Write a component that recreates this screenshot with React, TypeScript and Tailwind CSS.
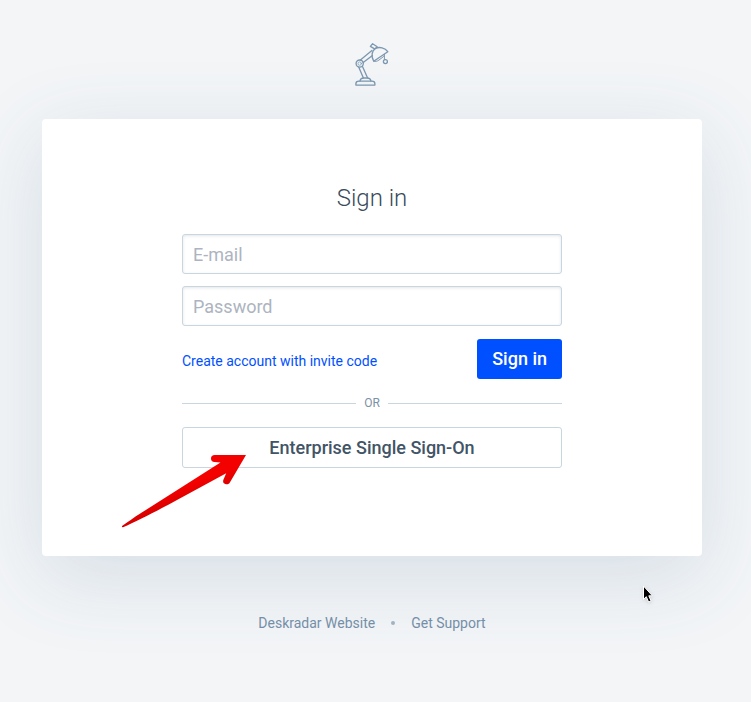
import React from "react";

function LampLogo() {
  return (
    <svg
      className="h-11 w-9"
      viewBox="0 0 36 44"
      fill="none"
      stroke="#7c97b0"
      strokeWidth="1.3"
      strokeLinecap="round"
      strokeLinejoin="round"
      role="img"
      aria-label="Deskradar"
    >
      <path d="M1.9 43.1v-1.4c0-1.6 1.3-2.6 3-2.6h13c1.7 0 3 1 3 2.6v1.4z" />
      <path d="M6 39c.3-2 1.7-3 3.6-3h3.7c1.9 0 3.3 1 3.6 3" />
      <path d="M4.8 25.2l4.5 10.6M8.5 24.5l5 11.3" />
      <circle cx="5.7" cy="21.6" r="3.6" />
      <circle cx="5.7" cy="21.6" r="1.7" strokeWidth="0.7" />
      <path d="M6.4 17.9L17.9 8.4M9.2 20.6l9.2-7.2" />
      <path d="M16.4 4.4l2.2-2.7 4.6 3-1.6 1.6M16.4 4.4l4.2 2.5" />
      <path d="M19.7 19.2c-2.6-4.8-2.2-10.4 1.9-12.7 3.8-2.1 9.4-.8 12.2 3.2z" />
      <path d="M19.9 19.2c1.6.5 3.4.1 5-1.1l4.2-3.2c1.1-.9 1.5-1.5 1.4-2.5" strokeWidth="1" />
      <path d="M30.4 13.6v4" strokeWidth="1" />
      <circle cx="31.4" cy="19.6" r="2" />
    </svg>
  );
}

function RedArrow() {
  return (
    <svg
      className="pointer-events-none absolute -left-16 top-6 h-20 w-32"
      viewBox="0 0 128 80"
      aria-hidden="true"
    >
      <defs>
        <linearGradient id="arrow" x1="0.4" y1="0.3" x2="0.65" y2="0.7">
          <stop offset="0.35" stopColor="#f30000" />
          <stop offset="1" stopColor="#c80000" />
        </linearGradient>
      </defs>
      <path
        d="M4 75C12 69.5 18 65 27 59.5L102.5 11.4L96.5 11.1C94.2 11 93 9.6 93 7.6C93 5.4 94.3 4 96.8 4L128 4L112 31.2C111 33.2 109.2 33.8 107.3 33C105.3 32.2 104.7 30.7 105.4 28.7L108.2 22.2L59 49C45 56.5 20 70 5 76.2C4.2 76.4 3.7 75.8 4 75Z"
        fill="url(#arrow)"
      />
    </svg>
  );
}

function Pointer() {
  return (
    <svg
      className="pointer-events-none absolute right-12 -bottom-12 h-5 w-3 drop-shadow"
      viewBox="0 0 12 20"
      aria-hidden="true"
    >
      <path
        d="M1.5 2V15.3L4.3 12.7L6.6 18L9.1 17L6.8 11.8H10.4Z"
        fill="#000"
        stroke="#fff"
        strokeWidth="1"
      />
    </svg>
  );
}

const inputClass =
  "h-10 w-full rounded-[3px] border border-[#c9d5df] bg-white px-[10px] text-lg text-[#425466] shadow-[inset_0_1px_3px_rgba(60,80,100,0.14)] outline-none placeholder:text-[#adb4bf]";

export default function App() {
  return (
    <div className="flex min-h-screen flex-col items-center bg-[#f3f5f7] pt-[42px] pr-[7px] pb-16 font-[Roboto,sans-serif]">
      <header>
        <LampLogo />
      </header>

      <main className="relative mt-[33px] w-full max-w-[660px] rounded bg-white px-6 pt-[60px] pb-22 shadow-[0_20px_80px_rgba(70,110,150,0.17)]">
        <form
          className="mx-auto flex max-w-[380px] flex-col"
          onSubmit={(event) => event.preventDefault()}
        >
          <h1 className="mb-[17px] text-center text-2xl leading-[38px] font-light text-[#394b5c]">
            Sign in
          </h1>
          <div className="flex flex-col gap-3">
            <input className={inputClass} type="email" placeholder="E-mail" aria-label="E-mail" />
            <input className={inputClass} type="password" placeholder="Password" aria-label="Password" />
            <div className="flex items-center justify-between pt-px">
              <a href="#invite" className="pt-1 text-sm text-[#0050ff]">
                Create account with invite code
              </a>
              <button
                type="submit"
                className="h-10 rounded-[3px] bg-[#0050ff] px-[15px] text-lg font-medium text-white"
              >
                Sign in
              </button>
            </div>
          </div>
          <div className="my-4 flex items-center gap-2 text-xs text-[#7c91a6]">
            <span className="h-px flex-1 bg-[#c9d5df]" />
            <span>OR</span>
            <span className="h-px flex-1 bg-[#c9d5df]" />
          </div>
          <div className="relative">
            <button
              type="button"
              className="h-[41px] w-full rounded-[3px] border border-[#c9d5df] bg-white text-lg font-medium text-[#425466]"
            >
              Enterprise Single Sign-On
            </button>
            <RedArrow />
          </div>
        </form>
        <Pointer />
      </main>

      <footer className="mt-[55px] flex items-center gap-4 text-sm leading-6 text-[#7690a9]">
        <a href="#website">Deskradar Website</a>
        <span className="size-1 rounded-full bg-[#a3b4c5]" />
        <a href="#support">Get Support</a>
      </footer>
    </div>
  );
}
